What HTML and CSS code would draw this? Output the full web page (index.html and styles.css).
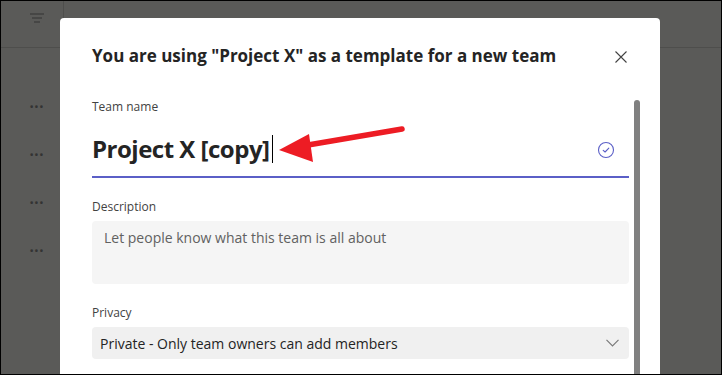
FILE: index.html
```html
<!DOCTYPE html>
<html lang="en">
<head>
    <meta charset="UTF-8">
    <meta name="viewport" content="width=device-width, initial-scale=1.0">
    <title>Create a team from template</title>
    <link rel="stylesheet" href="styles.css">
</head>
<body>
    <div class="frame">
        <div class="app">
            <div class="rail-head">
                <svg class="filter-icon" width="14" height="10" viewBox="0 0 14 10">
                    <line x1="0" y1="1" x2="14" y2="1" stroke="#333" stroke-width="1"/>
                    <line x1="2" y1="5" x2="12" y2="5" stroke="#333" stroke-width="1"/>
                    <line x1="4" y1="9" x2="10" y2="9" stroke="#333" stroke-width="1"/>
                </svg>
            </div>
            <div class="main-head">
                <span class="page-title">design team chat thread</span>
            </div>
            <div class="rail">
                <span class="dots">&middot;&middot;&middot;</span>
                <span class="dots">&middot;&middot;&middot;</span>
                <span class="dots">&middot;&middot;&middot;</span>
                <span class="dots">&middot;&middot;&middot;</span>
            </div>
            <div class="main"></div>
        </div>

        <div class="modal">
            <div class="modal-header">
                <h2>You are using "Project X" as a template for a new team</h2>
                <svg class="close-icon" width="12" height="12" viewBox="0 0 12 12">
                    <path d="M0.5 0.5 L11.5 11.5 M11.5 0.5 L0.5 11.5" stroke="#424242" stroke-width="1.1" fill="none"/>
                </svg>
            </div>

            <div class="modal-body">
                <div class="form">
                    <label class="field-label">Team name</label>
                    <div class="name-input">
                        <span class="name-text">Project X [copy]</span><span class="caret"></span>
                        <svg class="check-icon" width="18" height="18" viewBox="0 0 18 18">
                            <circle cx="9" cy="9" r="7.5" stroke="#5b5fc7" stroke-width="1.1" fill="none"/>
                            <path d="M6.2 9.3 L8.1 11 L11.8 7.2" stroke="#5b5fc7" stroke-width="1.1" fill="none" stroke-linecap="round" stroke-linejoin="round"/>
                        </svg>
                    </div>

                    <label class="field-label label-gap">Description</label>
                    <div class="text-area">Let people know what this team is all about</div>

                    <label class="field-label label-gap">Privacy</label>
                    <div class="select">
                        <span>Private - Only team owners can add members</span>
                        <svg class="chevron" width="13" height="8" viewBox="0 0 13 8">
                            <path d="M0.5 0.8 L6.5 6.8 L12.5 0.8" stroke="#7a7a7a" stroke-width="1.2" fill="none"/>
                        </svg>
                    </div>
                </div>
                <div class="scrollbar"></div>
            </div>
        </div>

        <!-- annotation arrow -->
        <svg class="arrow" width="130" height="44" viewBox="0 0 130 44">
            <line x1="124" y1="7" x2="30" y2="23" stroke="#ed1c24" stroke-width="5.5" stroke-linecap="round"/>
            <polygon points="1,28 31,12 35,40" fill="#ed1c24"/>
        </svg>
    </div>
</body>
</html>
```

FILE: styles.css
```css
:root {
    --overlay: #5a5a58;
    --line: #4e4e4c;
    --brand: #5b5fc7;
    --text: #242424;
    --muted: #424242;
}

body, html {
    margin: 0;
    padding: 0;
    font-family: "Open Sans", "Noto Sans", sans-serif;
}

.frame {
    position: relative;
    width: 722px;
    height: 375px;
    box-sizing: border-box;
    border: 1px solid #000;
    background-color: var(--overlay);
    overflow: hidden;
}

.app {
    display: grid;
    grid-template-columns: 63px 1fr;
    grid-template-rows: 47px 1fr;
    height: 100%;
}

.rail-head {
    display: flex;
    justify-content: center;
    padding-top: 12px;
    border-right: 1px solid var(--line);
    border-bottom: 1px solid var(--line);
}

.filter-icon {
    margin-left: 10px;
}

.main-head {
    display: flex;
    align-items: center;
    padding-left: 32px;
    border-bottom: 1px solid var(--line);
}

.page-title {
    font-size: 18px;
    font-weight: 700;
    color: #4a4a48;
    padding-top: 4px;
}

.rail {
    display: flex;
    flex-direction: column;
    align-items: center;
    padding-top: 44px;
    gap: 22px;
    border-right: 1px solid var(--line);
    padding-left: 8px;
}

.dots {
    font-size: 22px;
    line-height: 26px;
    letter-spacing: -1px;
    color: #333;
}

.modal {
    position: absolute;
    left: 59px;
    top: 17px;
    width: 600px;
    height: 400px;
    background: #fff;
    border-radius: 4px;
    box-sizing: border-box;
    padding: 26px 20px 0 32px;
}

.modal-header {
    display: flex;
    align-items: center;
    justify-content: space-between;
    padding-right: 13px;
}

.modal-header h2 {
    margin: 0;
    font-size: 17px;
    line-height: 24px;
    font-weight: 700;
    color: var(--text);
}

.close-icon {
    margin-top: 1px;
}

.modal-body {
    display: flex;
    gap: 5px;
    margin-top: 31px;
}

.form {
    flex: 1;
    display: flex;
    flex-direction: column;
}

.scrollbar {
    width: 6px;
    margin-top: 1px;
    height: 300px;
    background: #808080;
    border-radius: 3px 3px 0 0;
}

.field-label {
    display: block;
    font-size: 12px;
    line-height: 16px;
    color: var(--muted);
}

.label-gap {
    margin-top: 21px;
}

.name-input {
    display: flex;
    align-items: center;
    padding: 16px 14px 9px 0;
    border-bottom: 2px solid var(--brand);
}

.name-text {
    font-size: 24px;
    line-height: 36px;
    font-weight: 700;
    color: var(--text);
    letter-spacing: -0.5px;
}

.caret {
    width: 1px;
    height: 28px;
    margin-left: 2px;
    background: #000;
}

.check-icon {
    margin-left: auto;
    margin-top: 2px;
}

.text-area {
    margin-top: 6px;
    height: 63px;
    box-sizing: border-box;
    padding: 7px 12px;
    background: #f5f5f5;
    border-radius: 4px;
    font-size: 14px;
    line-height: 20px;
    color: #616161;
}

.select {
    display: flex;
    align-items: center;
    justify-content: space-between;
    margin-top: 6px;
    height: 32px;
    padding: 0 10px 0 8px;
    background: #f0f0f0;
    border-radius: 4px;
    font-size: 14px;
    color: var(--text);
}

.arrow {
    position: absolute;
    left: 277px;
    top: 121px;
}
```
